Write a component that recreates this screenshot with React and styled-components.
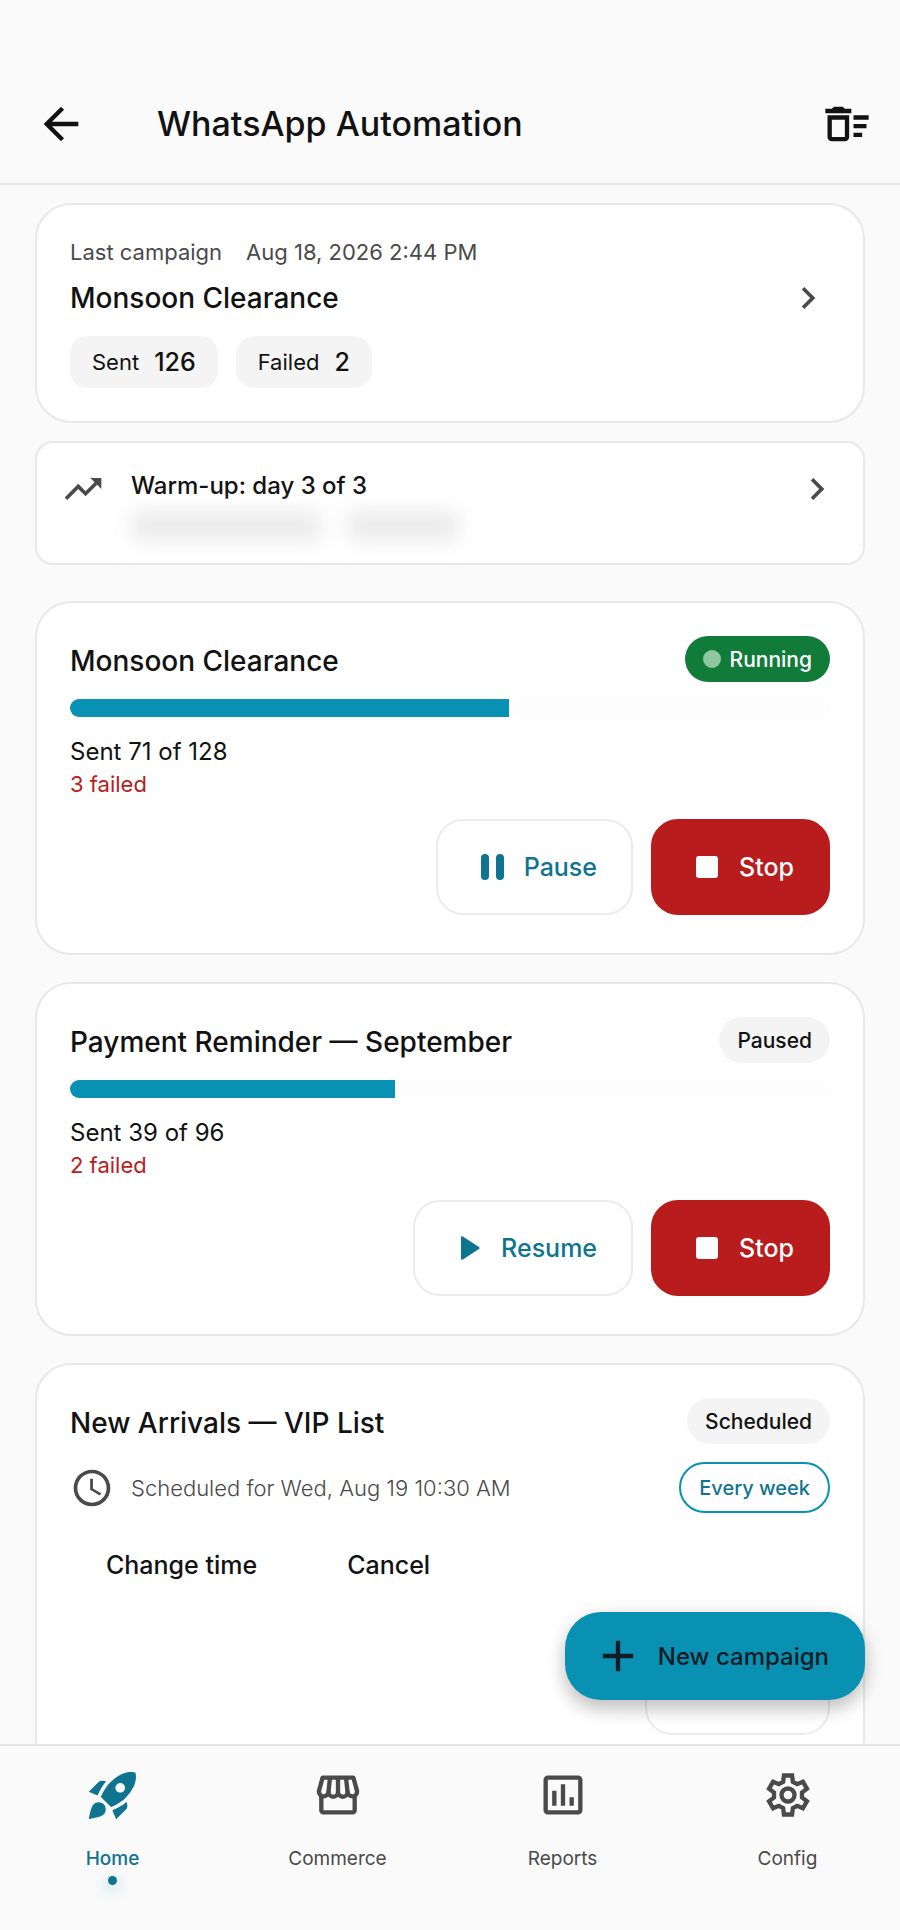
import React from 'react'
import styled, { createGlobalStyle } from 'styled-components'
import {
    MdAdd,
    MdArrowBack,
    MdChevronRight,
    MdOutlineDeleteSweep,
    MdRocketLaunch,
    MdSchedule,
    MdTrendingUp,
} from 'react-icons/md'

const GlobalStyle = createGlobalStyle`
  * {
    box-sizing: border-box;
  }
  body {
    margin: 0;
    background: #fafafa;
    color: #121212;
    font-family: Inter, "Liberation Sans", sans-serif;
  }
  h1, h2, p {
    margin: 0;
  }
  button {
    font-family: inherit;
    cursor: pointer;
  }
  svg {
    display: block;
    flex: none;
  }
`;

const Screen = styled.div`
  display: flex;
  flex-direction: column;
  height: 100vh;
`;

const Header = styled.header`
  display: flex;
  align-items: center;
  flex: none;
  padding: 64px 27px 0 35px;
  height: 185px;
  border-bottom: 2px solid #e6e6e6;
`;

const IconButton = styled.button`
  display: flex;
  padding: 0;
  border: 0;
  background: none;
  color: #121212;
`;

const PageTitle = styled.h1`
  flex: 1;
  margin-left: 70px;
  font-size: 34px;
  line-height: 44px;
  font-weight: 500;
`;

const Content = styled.div`
  position: relative;
  flex: 1;
  min-height: 0;
`;

const Scroll = styled.main`
  height: 100%;
  overflow-y: auto;
  scrollbar-width: none;
  padding: 18px 35px 120px;
`;

const Card = styled.section`
  padding: 33px 33px 38px;
  border: 2px solid #e8e8e8;
  border-radius: 36px;
  background: #fff;

  & + & {
    margin-top: 27px;
  }
`;

const LastCampaign = styled(Card)`
  padding-bottom: 33px;
`;

const Meta = styled.p`
  display: flex;
  gap: 24px;
  color: #4a4a4a;
  font-size: 22px;
  line-height: 28px;
`;

const TitleRow = styled.div`
  display: flex;
  align-items: center;
  justify-content: space-between;
  gap: 18px;
  color: #4a4a4a;
`;

const LastTitleRow = styled(TitleRow)`
  margin-top: 10px;
`;

const CampaignTitleRow = styled(TitleRow)`
  min-height: 50px;
`;

const CardTitle = styled.h2`
  color: #121212;
  font-size: 28px;
  line-height: 44px;
  font-weight: 500;
`;

const Chips = styled.div`
  display: flex;
  gap: 18px;
  margin-top: 16px;
`;

const Chip = styled.span`
  display: flex;
  align-items: center;
  gap: 15px;
  height: 52px;
  padding: 0 22px;
  border-radius: 18px;
  background: #f4f4f4;
  font-size: 22px;

  b {
    font-size: 25px;
    font-weight: 500;
  }
`;

const WarmUp = styled.section`
  display: flex;
  gap: 26px;
  margin: 18px 0 36px;
  padding: 24px 24px 22px;
  border: 2px solid #e8e8e8;
  border-radius: 18px;
  background: #fff;
  color: #4a4a4a;
`;

const WarmUpBody = styled.div`
  flex: 1;
`;

const WarmUpTitle = styled.h2`
  color: #121212;
  font-size: 24px;
  line-height: 38px;
  font-weight: 500;
`;

const Redacted = styled.div`
  display: flex;
  gap: 26px;
  margin-top: 6px;
  filter: blur(10px);
`;

const RedactedWord = styled.span`
  width: ${props => props.$width}px;
  height: 30px;
  background: #ebebeb;
`;

const Badge = styled.span`
  display: flex;
  align-items: center;
  align-self: flex-start;
  gap: 9px;
  height: 46px;
  padding: 0 18px;
  border-radius: 23px;
  background: ${props => (props.$running ? '#117c3a' : '#f4f4f4')};
  color: ${props => (props.$running ? '#fff' : '#121212')};
  font-size: 21px;
  font-weight: 500;
`;

const Dot = styled.i`
  width: 18px;
  height: 18px;
  border-radius: 50%;
  background: #8fc7a1;
`;

const Track = styled.div`
  height: 18px;
  margin-top: 13px;
  border-radius: 9px;
  background: #fdfdfd;
  overflow: hidden;
`;

const Fill = styled.div`
  height: 100%;
  background: #0891b2;
`;

const Progress = styled.p`
  margin-top: 18px;
  font-size: 24px;
  line-height: 34px;
`;

const Failed = styled.p`
  color: #b91c1c;
  font-size: 22px;
  line-height: 30px;
`;

const Actions = styled.div`
  display: flex;
  justify-content: ${props => (props.$start ? 'flex-start' : 'flex-end')};
  gap: 18px;
  margin-top: ${props => props.$top}px;
`;

const Button = styled.button`
  display: flex;
  align-items: center;
  justify-content: center;
  gap: 12px;
  height: 96px;
  padding: 0 34px;
  border: 2px solid transparent;
  border-radius: 27px;
  background: none;
  color: #121212;
  font-size: 25px;
  font-weight: 500;
`;

const OutlineButton = styled(Button)`
  min-width: 185px;
  border-color: #ebebeb;
  background: #fff;
  color: #0e7490;
`;

const StopButton = styled(Button)`
  background: #b91c1c;
  border-color: #b91c1c;
  color: #fff;
`;

const ScheduleRow = styled.div`
  display: flex;
  align-items: center;
  gap: 17px;
  margin-top: 14px;
  color: #4a4a4a;
`;

const ScheduleText = styled.p`
  flex: 1;
  font-size: 22px;
  font-weight: 300;
`;

const Repeat = styled.span`
  display: flex;
  align-items: center;
  height: 51px;
  padding: 0 18px;
  border: 2px solid #0891b2;
  border-radius: 26px;
  color: #0e7490;
  font-size: 20px;
  font-weight: 500;
`;

const NewCampaign = styled.button`
  position: absolute;
  right: 35px;
  bottom: 44px;
  display: flex;
  align-items: center;
  gap: 14px;
  height: 88px;
  padding: 0 36px 0 27px;
  border: 0;
  border-radius: 36px;
  background: #0891b2;
  color: #0c1c26;
  font-size: 24px;
  font-weight: 500;
  box-shadow: 0 10px 18px rgba(0, 0, 0, 0.2), 0 2px 22px rgba(0, 0, 0, 0.08);
`;

const NavBar = styled.nav`
  display: grid;
  grid-template-columns: repeat(4, 1fr);
  flex: none;
  height: 186px;
  padding-top: 20px;
  border-top: 2px solid #e6e6e6;
`;

const NavItem = styled.a`
  display: flex;
  flex-direction: column;
  align-items: center;
  color: ${props => (props.$active ? '#0e7490' : '#4a4a4a')};
  font-size: 19px;
  line-height: 28px;
  font-weight: ${props => (props.$active ? 500 : 400)};
  text-decoration: none;
`;

const NavIcon = styled.span`
  display: flex;
  align-items: center;
  height: 58px;
  margin-bottom: 21px;
`;

const ActiveDot = styled.i`
  width: 9px;
  height: 9px;
  margin-top: 3px;
  border-radius: 50%;
  background: #0e7490;
  box-shadow: 0 4px 14px 4px rgba(8, 145, 178, 0.16);
`;

const PauseIcon = () => (
    <svg width="40" height="40" viewBox="0 0 40 40" fill="currentColor">
        <rect x="9" y="7" width="8" height="26" rx="4" />
        <rect x="24" y="7" width="8" height="26" rx="4" />
    </svg>
)

const PlayIcon = () => (
    <svg width="40" height="40" viewBox="0 0 40 40" fill="currentColor">
        <path d="M12 9.600c0-1 1-1.600 1.900-1.100l16 10.400c.8.500.8 1.700 0 2.200l-16 10.400c-.9.500-1.900-.1-1.900-1.100z" />
    </svg>
)

const StopIcon = () => (
    <svg width="40" height="40" viewBox="0 0 40 40" fill="currentColor">
        <rect x="9" y="9" width="22" height="22" rx="3" />
    </svg>
)

const StoreIcon = () => (
    <svg width="52" height="52" viewBox="0 0 24 24" fill="none" stroke="currentColor" strokeWidth="2" strokeLinejoin="round">
        <path d="M4.900 4h14.200l1.700 6.200a2.200 2.200 0 0 1-4.400.4 2.200 2.200 0 0 1-4.400 0 2.200 2.200 0 0 1-4.400 0 2.200 2.200 0 0 1-4.400-.4z" />
        <path d="M8.300 4l-.7 6.600M12 4v6.600M15.700 4l.7 6.600" />
        <path d="M4.300 12v7a1 1 0 0 0 1 1h13.400a1 1 0 0 0 1-1v-7" />
    </svg>
)

const ReportsIcon = () => (
    <svg width="52" height="52" viewBox="0 0 24 24" fill="currentColor">
        <path d="M19 3H5c-1.100 0-2 .9-2 2v14c0 1.100.9 2 2 2h14c1.100 0 2-.9 2-2V5c0-1.100-.9-2-2-2zm0 16H5V5h14v14zM7 10h2v7H7zm4-3h2v10h-2zm4 6h2v4h-2z" />
    </svg>
)

const GearIcon = () => (
    <svg width="52" height="52" viewBox="0 0 24 24" fill="none" stroke="currentColor" strokeWidth="2">
        <path d="M10.130 21h3.740l.38-2.900 2-1.100 2.620 1.100 1.870-3.230-2.290-1.720v-2.300l2.290-1.720-1.870-3.230L16.250 7l-2-1.100L13.870 3h-3.740l-.38 2.900-2 1.100-2.620-1.100-1.870 3.230 2.290 1.720v2.300l-2.290 1.720 1.870 3.230L7.750 17l2 1.100z" />
        <circle cx="12" cy="12" r="3" />
    </svg>
)

function RunCard({ title, sent, total, failed, running }) {
    return (
        <Card>
            <CampaignTitleRow>
                <CardTitle>{title}</CardTitle>
                <Badge $running={running}>
                    {running && <Dot />}
                    {running ? 'Running' : 'Paused'}
                </Badge>
            </CampaignTitleRow>
            <Track>
                <Fill style={{ width: `${((sent + failed) / total) * 100}%` }} />
            </Track>
            <Progress>Sent {sent} of {total}</Progress>
            <Failed>{failed} failed</Failed>
            <Actions $top={20}>
                <OutlineButton>
                    {running ? <PauseIcon /> : <PlayIcon />}
                    {running ? 'Pause' : 'Resume'}
                </OutlineButton>
                <StopButton>
                    <StopIcon />
                    Stop
                </StopButton>
            </Actions>
        </Card>
    )
}

export default function App() {
    return (
        <Screen>
            <GlobalStyle />
            <Header>
                <IconButton aria-label="Back"><MdArrowBack size={52} /></IconButton>
                <PageTitle>WhatsApp Automation</PageTitle>
                <IconButton aria-label="Clear campaigns"><MdOutlineDeleteSweep size={52} /></IconButton>
            </Header>

            <Content>
                <Scroll>
                    <LastCampaign>
                        <Meta>
                            <span>Last campaign</span>
                            <span>Aug 18, 2026 2:44 PM</span>
                        </Meta>
                        <LastTitleRow>
                            <CardTitle>Monsoon Clearance</CardTitle>
                            <MdChevronRight size={44} />
                        </LastTitleRow>
                        <Chips>
                            <Chip>Sent <b>126</b></Chip>
                            <Chip>Failed <b>2</b></Chip>
                        </Chips>
                    </LastCampaign>

                    <WarmUp>
                        <MdTrendingUp size={44} />
                        <WarmUpBody>
                            <WarmUpTitle>Warm-up: day 3 of 3</WarmUpTitle>
                            <Redacted>
                                <RedactedWord $width={190} />
                                <RedactedWord $width={112} />
                            </Redacted>
                        </WarmUpBody>
                        <MdChevronRight size={44} />
                    </WarmUp>

                    <RunCard title="Monsoon Clearance" sent={71} total={128} failed={3} running />
                    <RunCard title="Payment Reminder — September" sent={39} total={96} failed={2} />

                    <Card>
                        <CampaignTitleRow>
                            <CardTitle>New Arrivals — VIP List</CardTitle>
                            <Badge>Scheduled</Badge>
                        </CampaignTitleRow>
                        <ScheduleRow>
                            <MdSchedule size={44} />
                            <ScheduleText>Scheduled for Wed, Aug 19 10:30 AM</ScheduleText>
                            <Repeat>Every week</Repeat>
                        </ScheduleRow>
                        <Actions $start $top={4}>
                            <Button>Change time</Button>
                            <Button>Cancel</Button>
                        </Actions>
                        <Actions $top={26}>
                            <OutlineButton aria-label="Campaign options" />
                        </Actions>
                    </Card>
                </Scroll>
                <NewCampaign>
                    <MdAdd size={52} />
                    New campaign
                </NewCampaign>
            </Content>

            <NavBar>
                <NavItem href="#home" $active>
                    <NavIcon><MdRocketLaunch size={58} /></NavIcon>
                    Home
                    <ActiveDot />
                </NavItem>
                <NavItem href="#commerce">
                    <NavIcon><StoreIcon /></NavIcon>
                    Commerce
                </NavItem>
                <NavItem href="#reports">
                    <NavIcon><ReportsIcon /></NavIcon>
                    Reports
                </NavItem>
                <NavItem href="#config">
                    <NavIcon><GearIcon /></NavIcon>
                    Config
                </NavItem>
            </NavBar>
        </Screen>
    )
}
